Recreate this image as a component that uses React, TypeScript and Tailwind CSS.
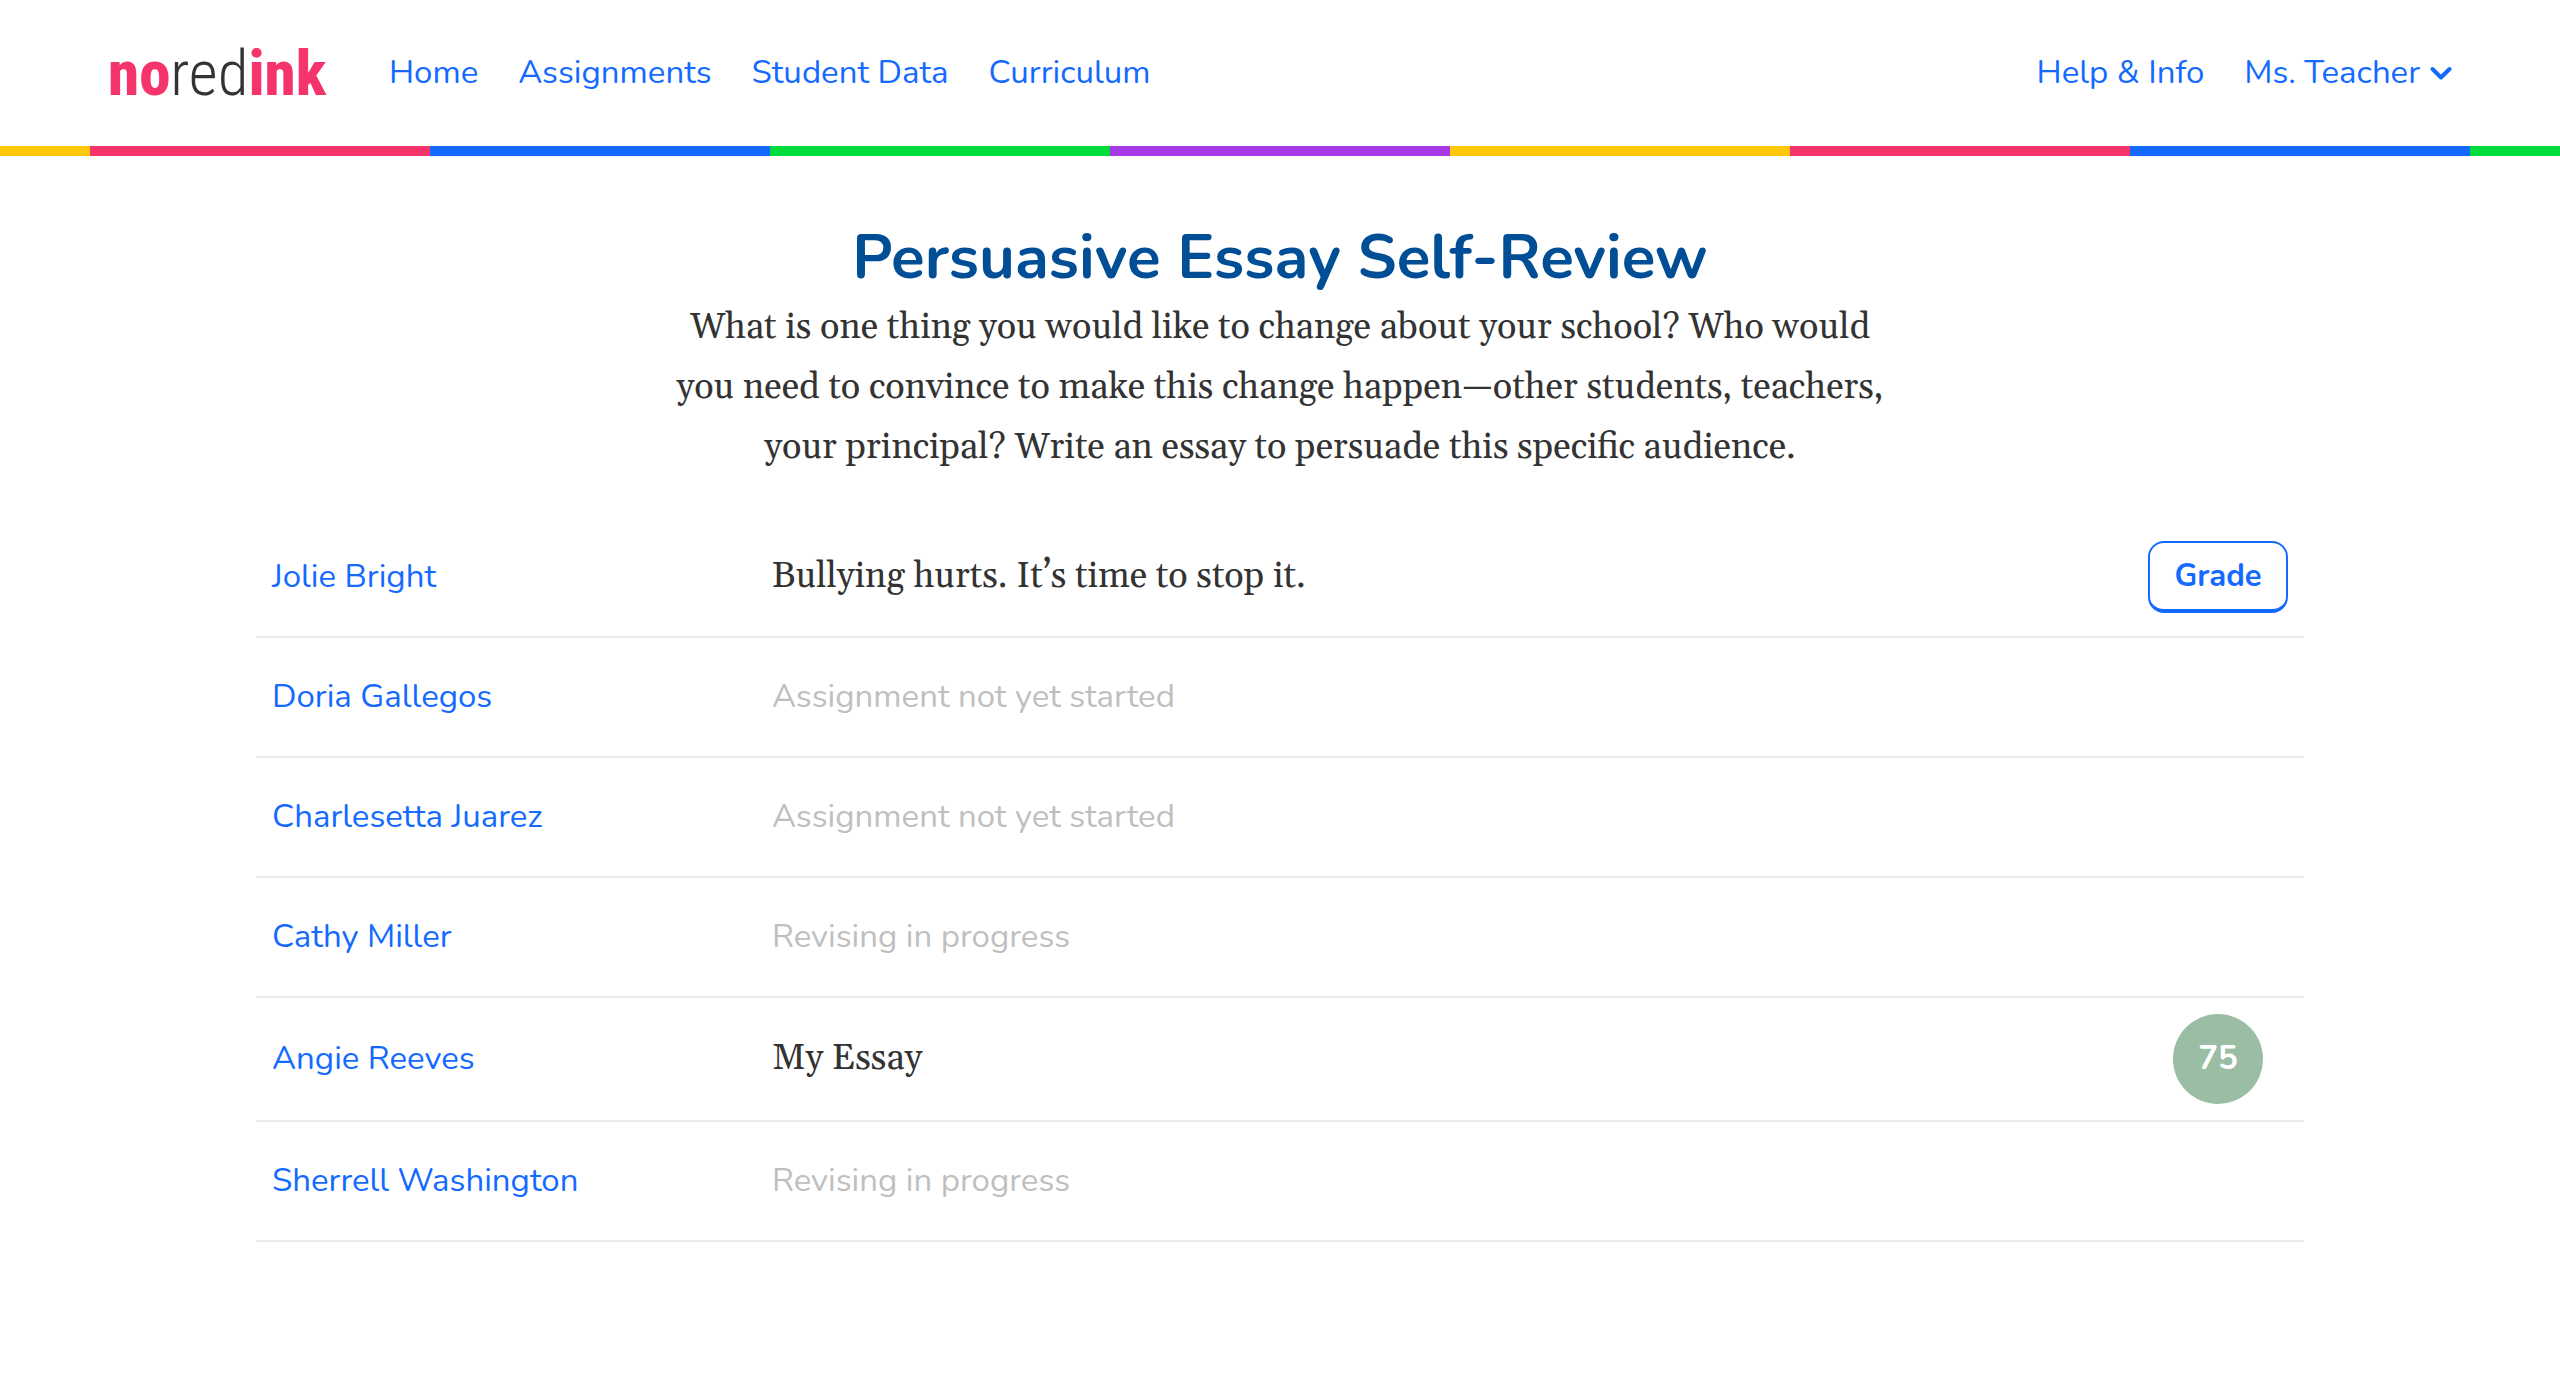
import React from 'react';
import clsx from 'clsx';

type Submission = {
  student: string;
  title?: string;
  status?: string;
  needsGrade?: boolean;
  score?: number;
};

const NAV_LINKS = ['Home', 'Assignments', 'Student Data', 'Curriculum'];

const STRIPES = [
  'bg-[#ffc709]',
  'bg-[#f5346b]',
  'bg-[#146aff]',
  'bg-[#00db3c]',
  'bg-[#a639e5]',
  'bg-[#ffc709]',
  'bg-[#f5346b]',
  'bg-[#146aff]',
  'bg-[#00db3c]',
];

const SUBMISSIONS: Submission[] = [
  { student: 'Jolie Bright', title: 'Bullying hurts. It’s time to stop it.', needsGrade: true },
  { student: 'Doria Gallegos', status: 'Assignment not yet started' },
  { student: 'Charlesetta Juarez', status: 'Assignment not yet started' },
  { student: 'Cathy Miller', status: 'Revising in progress' },
  { student: 'Angie Reeves', title: 'My Essay', score: 75 },
  { student: 'Sherrell Washington', status: 'Revising in progress' },
];

function Logo() {
  return (
    <a
      href="#"
      className="w-[281px] pt-0.5 font-['Roboto_Condensed','Roboto','Liberation_Sans',sans-serif] text-[63px] leading-[72px] font-extrabold text-[#f5346b]"
    >
      no<span className="font-light text-[#333333]">red</span>ink
    </a>
  );
}

function ChevronDown() {
  return (
    <svg viewBox="0 0 22 15" className="w-[22px] h-[15px]" fill="none" stroke="currentColor" strokeWidth="4" strokeLinecap="round" strokeLinejoin="round" aria-hidden="true">
      <path d="M2.5 3 L11 11.5 L19.5 3" />
    </svg>
  );
}

function Header() {
  return (
    <header>
      <div className="h-[146px] px-[108px] flex items-center text-[33px] leading-[40px] text-[#146aff]">
        <Logo />
        <nav className="flex gap-10">
          {NAV_LINKS.map(label => (
            <a key={label} href="#">{label}</a>
          ))}
        </nav>
        <div className="ml-auto flex items-center gap-10">
          <a href="#">Help &amp; Info</a>
          <button type="button" className="flex items-center gap-2.5">
            Ms. Teacher
            <ChevronDown />
          </button>
        </div>
      </div>

      {/* Rainbow rule, repeats outwards from the middle */}
      <div className="flex justify-center overflow-hidden">
        {STRIPES.map((color, i) => (
          <div key={i} className={clsx('h-2.5 w-[340px] shrink-0', color)} />
        ))}
      </div>
    </header>
  );
}

function SubmissionRow({ submission }: { submission: Submission }) {
  const { student, title, status, needsGrade, score } = submission;

  return (
    <tr className="h-[120px] border-b-2 border-[#ebebeb]">
      <th scope="row" className="w-[500px] px-4 text-left font-normal">
        <a href="#" className="text-[#146aff]">{student}</a>
      </th>
      <td className="px-4">
        {title
          ? <span className="font-['Gelasio','Georgia','DejaVu_Serif_Condensed',serif] text-[36px] text-[#333333]">{title}</span>
          : <span className="text-[#bfbfbf]">{status}</span>}
      </td>
      <td className="w-[172px] px-4 text-center">
        {needsGrade && (
          <button
            type="button"
            className="w-full h-[72px] rounded-2xl border-2 border-b-4 border-[#146aff] bg-white text-[31px] font-bold text-[#146aff]"
          >
            Grade
          </button>
        )}
        {score !== undefined && (
          <div className="my-4 inline-flex size-[90px] items-center justify-center rounded-full bg-[#9abda4] align-middle font-bold text-white">
            {score}
          </div>
        )}
      </td>
    </tr>
  );
}

export default function App() {
  return (
    <div className="min-h-screen bg-white font-['Nunito','Open_Sans',sans-serif] text-[#333333]">
      <Header />

      <main className="mx-auto w-4/5 pt-16">
        <div className="mx-auto max-w-[1240px] text-center">
          <h1 className="mb-0.5 text-[62px] leading-[76px] font-bold text-[#004e95]">Persuasive Essay Self-Review</h1>
          <p className="font-['Gelasio','Georgia','DejaVu_Serif_Condensed',serif] text-[36px] leading-[60px]">
            What is one thing you would like to change about your school? Who would you need to convince to
            make this change happen—other students, teachers, your principal? Write an essay to persuade this
            specific audience.
          </p>
        </div>

        <table className="mt-[39px] w-full table-fixed text-[33px] leading-[44px]">
          <tbody>
            {SUBMISSIONS.map(submission => (
              <SubmissionRow key={submission.student} submission={submission} />
            ))}
          </tbody>
        </table>
      </main>
    </div>
  );
}
